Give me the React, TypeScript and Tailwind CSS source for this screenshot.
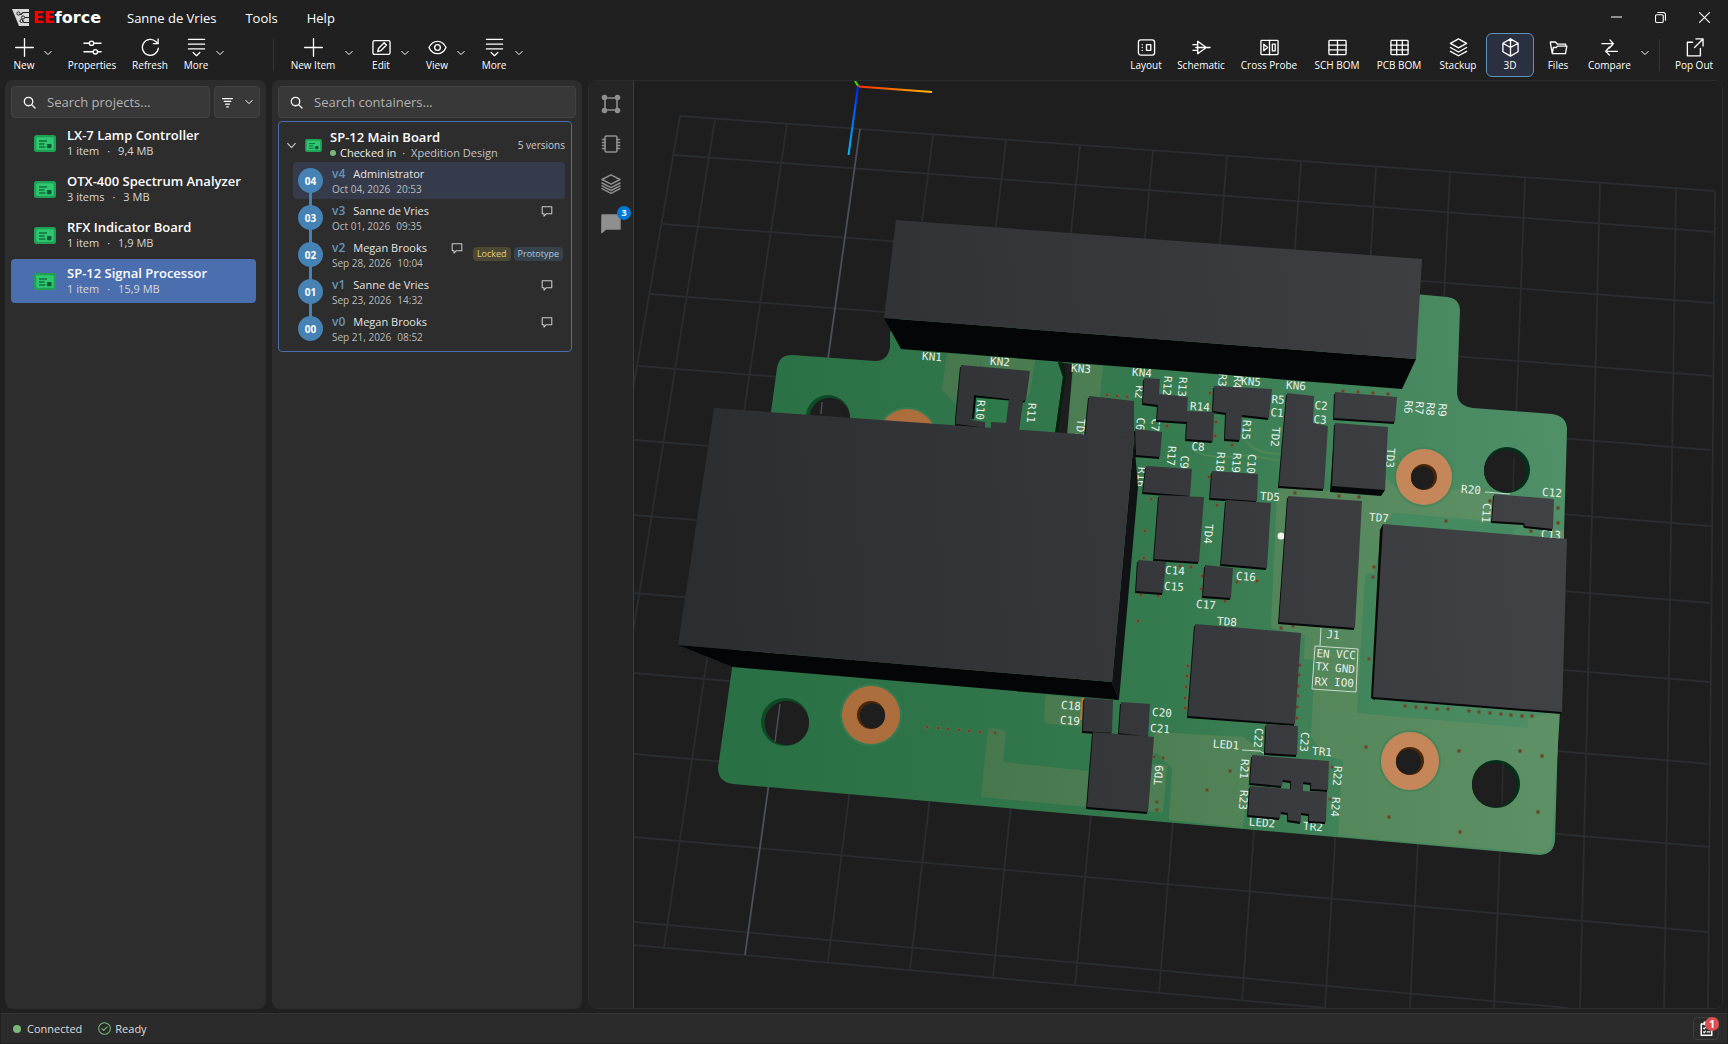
import { ReactNode } from "react";

type IconProps = { children: ReactNode; size?: number; stroke?: number; className?: string };

function Icon({ children, size = 20, stroke = 1.4, className = "" }: IconProps) {
  return (
    <svg
      width={size}
      height={size}
      viewBox="0 0 20 20"
      fill="none"
      stroke="currentColor"
      strokeWidth={stroke}
      strokeLinecap="round"
      strokeLinejoin="round"
      className={`shrink-0 ${className}`}
      aria-hidden="true"
    >
      {children}
    </svg>
  );
}

const icons = {
  plus: <path d="M10 0.7v18.6M0.7 10h18.6" />,
  sliders: (
    <>
      <path d="M1 5.5h5.5M11.5 5.5H19M1 14.5h9.5M15.5 14.5H19" />
      <circle cx="9" cy="5.5" r="2.3" />
      <circle cx="13" cy="14.5" r="2.3" />
    </>
  ),
  refresh: (
    <>
      <path d="M18.2 10.8a8.4 8.4 0 1 1-2.4-6.9l1.8 1.8" />
      <path d="M18 1v5h-5" />
    </>
  ),
  more: (
    <>
      <path d="M1.5 1.5h17M1.5 6.5h17M1.5 11.5h17" />
      <path d="M6.5 15.3l3.5 3.3 3.5-3.3" />
    </>
  ),
  edit: (
    <>
      <rect x="1" y="2.7" width="18" height="14.6" rx="1.8" />
      <path d="M6 14.3l.8-3.3 6-6 2.4 2.4-6 6z" />
    </>
  ),
  eye: (
    <>
      <path d="M1 10c2-4.2 5.2-6.5 9-6.5s7 2.3 9 6.5c-2 4.2-5.2 6.5-9 6.5S3 14.2 1 10z" />
      <circle cx="10" cy="10" r="3" />
    </>
  ),
  layout: (
    <>
      <rect x="1.5" y="2" width="17" height="16" rx="2.5" />
      <rect x="10" y="7" width="4.5" height="6" />
      <path d="M5.5 7v.1M5.5 10v.1M5.5 13v.1" />
    </>
  ),
  schematic: <path d="M1 7h5M1 13h5M6 3.5v13L15 10zM4 10h15" />,
  crossProbe: (
    <>
      <rect x="1" y="2.5" width="18" height="15" rx=".8" />
      <path d="M10 2.5v15M4 6.5v7l4-3.5z" />
      <rect x="13" y="6.5" width="3" height="7" />
    </>
  ),
  schBom: (
    <>
      <rect x="1" y="2.5" width="18" height="15" rx=".8" />
      <path d="M1 7.5h18M1 12.5h18M10 2.5v15" />
    </>
  ),
  pcbBom: (
    <>
      <rect x="1" y="2.5" width="18" height="15" rx=".8" />
      <path d="M1 7.5h18M1 12.5h18M7 2.5v15M13 2.5v15" />
    </>
  ),
  stack: <path d="M10 1l8.500 4.700L10 10.400 1.500 5.700zM1.500 10L10 14.700 18.500 10M1.500 14L10 18.700l8.500-4.700" />,
  cube: <path d="M10 1l8 4.500v9L10 19l-8-4.500v-9zM2 5.500l8 4.500 8-4.500M10 1v18" />,
  folder: <path d="M3.500 16.500L1.500 5.500V4.200h5.300L9 6.500h8.500v2M3.500 16.500h13.800l1.500-8H9L7.500 10H4.500z" />,
  compare: <path d="M2 6h12M10.500 2L14 6l-4 4.500M18.500 14h-12M10 9.500L6 14l4 4" />,
  popOut: <path d="M8 4.500H2.500v14.300h13.700V11M11.500 1h7.500v7.500M19 1l-9 9" />,
  search: (
    <>
      <circle cx="8.5" cy="8.5" r="6.5" />
      <path d="M13.300 13.300L18.500 18.500" />
    </>
  ),
  comment: <path d="M2 3h16v11.500H9L5 18.500v-4H2z" />,
};

type ToolButtonProps = { icon: keyof typeof icons; label: string; width: string; active?: boolean };

function ToolButton({ icon, label, width, active }: ToolButtonProps) {
  return (
    <button
      type="button"
      className={`flex h-11 shrink-0 flex-col items-center rounded-md border pt-1 text-[10px] leading-4 whitespace-nowrap text-white ${width} ${
        active ? "border-[#5f93bb] bg-[#2b3040]" : "border-transparent"
      }`}
    >
      <Icon size={19}>{icons[icon]}</Icon>
      <span>{label}</span>
    </button>
  );
}

function Chevron({ label }: { label: string }) {
  return (
    <button type="button" aria-label={label} className="flex h-10 w-4 shrink-0 items-center justify-center text-white">
      <Icon size={8} stroke={2.5}>
        <path d="M2 6l8 8 8-8" />
      </Icon>
    </button>
  );
}

function BoardIcon({ small }: { small?: boolean }) {
  return (
    <svg width={small ? 17 : 22} height={small ? 13 : 17} viewBox="0 0 22 17" className="shrink-0" aria-hidden="true">
      <rect width="22" height="17" rx="2.5" fill="#1fa055" />
      <rect x="2.300" y="2.300" width="17.400" height="12.400" rx="1" fill="#30c772" />
      <path d="M5 6h8M5 9h5.500M5 12h6.500" stroke="#12703c" strokeWidth="1.3" />
      <rect x="13" y="9" width="4.500" height="4.300" rx=".8" fill="#0b5a33" />
    </svg>
  );
}

function Logo() {
  return (
    <div className="flex w-[92px] items-center gap-1">
      <svg width="17" height="17" viewBox="0 0 17 17" aria-hidden="true">
        <path d="M0 0h17v17H7z" fill="#d8d8d8" />
        <path d="M17 3.500h-6L9 5.500H6M17 8.500h-5M17 13.500h-5l-2-2.500" stroke="#222" strokeWidth="1.2" fill="none" />
        <circle cx="6.500" cy="4.500" r="1.600" fill="#d8d8d8" stroke="#222" />
        <circle cx="11" cy="8.500" r="1.600" fill="#d8d8d8" stroke="#222" />
        <circle cx="9.500" cy="12" r="1.500" fill="#d8d8d8" stroke="#222" />
      </svg>
      <span className="font-['DejaVu_Sans'] text-[16px] leading-5 font-bold text-white">
        <span className="text-[#ff0000]">EE</span>force
      </span>
    </div>
  );
}

function TitleBar() {
  return (
    <div className="flex h-[33px] items-center pt-0.5 pl-3">
      <Logo />
      <nav className="ml-[23px] flex gap-[29px] text-[13px] leading-5 text-white">
        <button type="button">Sanne de Vries</button>
        <button type="button">Tools</button>
        <button type="button">Help</button>
      </nav>
      <div className="ml-auto flex pr-0.5 text-white">
        <button type="button" aria-label="Minimize" className="flex w-11 justify-center">
          <Icon size={11} stroke={2}>
            <path d="M0 9h20" />
          </Icon>
        </button>
        <button type="button" aria-label="Restore" className="flex w-11 justify-center">
          <Icon size={11} stroke={2}>
            <rect x="1" y="5" width="14" height="14" rx="2" />
            <path d="M5 1h10a4 4 0 0 1 4 4v10" />
          </Icon>
        </button>
        <button type="button" aria-label="Close" className="flex w-11 justify-center">
          <Icon size={11} stroke={2}>
            <path d="M1 1l18 18M19 1L1 19" />
          </Icon>
        </button>
      </div>
    </div>
  );
}

function Toolbar() {
  return (
    <div className="flex h-[47px]">
      <div className="flex w-[273px] shrink-0 pl-2">
        <ToolButton icon="plus" label="New" width="w-8" />
        <Chevron label="New options" />
        <div className="w-2" />
        <ToolButton icon="sliders" label="Properties" width="w-14" />
        <ToolButton icon="refresh" label="Refresh" width="w-[60px]" />
        <ToolButton icon="more" label="More" width="w-8" />
        <Chevron label="More options" />
      </div>
      <div className="mt-1.5 h-8 w-px bg-[#333]" />
      <div className="flex gap-2 pl-[11px]">
        <div className="flex">
          <ToolButton icon="plus" label="New Item" width="w-14" />
          <Chevron label="New item options" />
        </div>
        <div className="flex">
          <ToolButton icon="edit" label="Edit" width="w-8" />
          <Chevron label="Edit options" />
        </div>
        <div className="flex">
          <ToolButton icon="eye" label="View" width="w-8" />
          <Chevron label="View options" />
        </div>
        <div className="flex">
          <ToolButton icon="more" label="More" width="w-[34px]" />
          <Chevron label="More item options" />
        </div>
      </div>
      <div className="ml-auto flex pr-1.5">
        <ToolButton icon="layout" label="Layout" width="w-12" />
        <ToolButton icon="schematic" label="Schematic" width="w-[62px]" />
        <ToolButton icon="crossProbe" label="Cross Probe" width="w-[74px]" />
        <ToolButton icon="schBom" label="SCH BOM" width="w-[62px]" />
        <ToolButton icon="pcbBom" label="PCB BOM" width="w-[62px]" />
        <ToolButton icon="stack" label="Stackup" width="w-14" />
        <ToolButton icon="cube" label="3D" width="w-12" active />
        <ToolButton icon="folder" label="Files" width="w-12" />
        <ToolButton icon="compare" label="Compare" width="w-[55px]" />
        <Chevron label="Compare options" />
        <div className="mx-1.5 mt-1.5 h-8 w-px bg-[#333]" />
        <ToolButton icon="popOut" label="Pop Out" width="w-14" />
      </div>
    </div>
  );
}

function SearchBox({ placeholder }: { placeholder: string }) {
  return (
    <label className="flex h-8 min-w-0 flex-1 items-center gap-[11px] rounded border border-[#424242] bg-[#383838] pl-[11px] text-white">
      <Icon size={13} stroke={2}>
        {icons.search}
      </Icon>
      <input
        type="search"
        aria-label={placeholder}
        placeholder={placeholder}
        className="w-full min-w-0 bg-transparent text-[13px] leading-5 outline-none placeholder:text-[#b4b4b4]"
      />
    </label>
  );
}

const projects = [
  { name: "LX-7 Lamp Controller", items: "1 item", size: "9,4 MB" },
  { name: "OTX-400 Spectrum Analyzer", items: "3 items", size: "3 MB" },
  { name: "RFX Indicator Board", items: "1 item", size: "1,9 MB" },
  { name: "SP-12 Signal Processor", items: "1 item", size: "15,9 MB", selected: true },
];

function ProjectsPanel() {
  return (
    <section className="w-[261px] shrink-0 rounded-lg bg-[#2d2d2d] p-1.5">
      <div className="flex gap-1">
        <SearchBox placeholder="Search projects..." />
        <button
          type="button"
          aria-label="Filter"
          className="flex h-8 w-[46px] items-center justify-center gap-3 rounded border border-[#424242] bg-[#383838] text-white"
        >
          <Icon size={11} stroke={2}>
            <path d="M1 3h18M4 8h12M6.500 13h7M8.500 18h3" />
          </Icon>
          <Icon size={8} stroke={2.5}>
            <path d="M2 6l8 8 8-8" />
          </Icon>
        </button>
      </div>
      <ul className="mt-[3px] mr-1 space-y-0.5">
        {projects.map((p) => (
          <li key={p.name}>
            <button
              type="button"
              className={`flex h-11 w-full items-center gap-[11px] rounded pl-[23px] text-left text-white ${
                p.selected ? "bg-[#4b6eaf]" : ""
              }`}
            >
              <BoardIcon />
              <span>
                <span className="block text-[13px] leading-4 font-semibold">{p.name}</span>
                <span className="flex gap-2 text-[11px] leading-4 text-[#d8d8d8]">
                  <span>{p.items}</span>
                  <span>·</span>
                  <span>{p.size}</span>
                </span>
              </span>
            </button>
          </li>
        ))}
      </ul>
    </section>
  );
}

const versions = [
  { id: "04", tag: "v4", author: "Administrator", date: "Oct 04, 2026", time: "20:53", active: true },
  { id: "03", tag: "v3", author: "Sanne de Vries", date: "Oct 01, 2026", time: "09:35", comment: true },
  { id: "02", tag: "v2", author: "Megan Brooks", date: "Sep 28, 2026", time: "10:04", comment: true, badges: true },
  { id: "01", tag: "v1", author: "Sanne de Vries", date: "Sep 23, 2026", time: "14:32", comment: true },
  { id: "00", tag: "v0", author: "Megan Brooks", date: "Sep 21, 2026", time: "08:52", comment: true },
];

function ContainersPanel() {
  return (
    <section className="w-[310px] shrink-0 rounded-lg bg-[#2d2d2d] p-1.5">
      <div className="flex">
        <SearchBox placeholder="Search containers..." />
      </div>
      <div className="mt-[3px] mr-1 rounded border border-[#4b6eaf] pt-[7px] pr-1.5 pb-1 pl-2">
        <div className="mb-px flex h-8 items-center">
          <button type="button" aria-label="Collapse" className="text-[#ccc]">
            <Icon size={9} stroke={2.5}>
              <path d="M1.500 5.500l8.500 9 8.500-9" />
            </Icon>
          </button>
          <div className="mr-2 ml-[9px]">
            <BoardIcon small />
          </div>
          <div className="text-[#c4c4c4]">
            <div className="text-[13px] leading-4 font-semibold text-white">SP-12 Main Board</div>
            <div className="flex items-center gap-1.5 text-[11px] leading-4">
              <span className="flex items-center gap-1 text-[#eee]">
                <span className="size-1.5 rounded-full bg-[#7ab87a]" />
                Checked in
              </span>
              <span>·</span>
              <span>Xpedition Design</span>
            </div>
          </div>
          <span className="ml-auto text-[10px] leading-4 text-[#ccc]">5 versions</span>
        </div>
        <ol className="ml-1.5">
          {versions.map((v, i) => (
            <li key={v.id} className={`flex h-[37px] rounded pl-[5px] ${v.active ? "bg-[#353b4b]" : ""}`}>
              <div className="relative flex w-[25px] items-center justify-center">
                {i > 0 && <span className="absolute -top-2 h-5 w-[3px] bg-[#4682b4]" />}
                <span className="relative flex size-[25px] items-center justify-center rounded-full bg-[#4682b4] text-[10px] leading-none font-bold text-white">
                  {v.id}
                </span>
              </div>
              <div className="ml-[9px] pt-1">
                <div className="flex h-[15px] gap-2 text-[11px] leading-4 text-[#e4e4e4]">
                  <span className="text-[12px] font-semibold text-[#6694bb]">{v.tag}</span>
                  <span>{v.author}</span>
                </div>
                <div className="flex gap-1.5 text-[10px] leading-4 text-[#bbb]">
                  <span>{v.date}</span>
                  <span>{v.time}</span>
                </div>
              </div>
              <div className={`ml-auto flex ${v.badges ? "pr-0.5" : "pr-3"}`}>
                {v.comment && (
                  <button type="button" aria-label="Comments" className="mt-1.5 h-3 text-[#ccc]">
                    <Icon size={12} stroke={1.7}>
                      {icons.comment}
                    </Icon>
                  </button>
                )}
                {v.badges && (
                  <div className="mt-[11px] ml-2.5 flex h-3.5 gap-[3px] text-[9px] leading-[14px]">
                    <span className="rounded-sm bg-[#4d4833] px-1 text-[#e0cf80]">Locked</span>
                    <span className="rounded-sm bg-[#37424b] px-1 text-[#a9cbe2]">Prototype</span>
                  </div>
                )}
              </div>
            </li>
          ))}
        </ol>
      </div>
    </section>
  );
}

function ViewerRail() {
  return (
    <div className="flex w-[45px] shrink-0 flex-col items-center gap-5 border-r border-[#3c3c3c] bg-[#252525] pt-[13px] text-[#8f8f8f]">
      <button type="button" aria-label="Nets">
        <Icon stroke={1.6}>
          <path d="M4 4h12v12H4z" />
          <g fill="currentColor">
            <circle cx="3.500" cy="3.500" r="2" />
            <circle cx="16.500" cy="3.500" r="2" />
            <circle cx="3.500" cy="16.500" r="2" />
            <circle cx="16.500" cy="16.500" r="2" />
          </g>
        </Icon>
      </button>
      <button type="button" aria-label="Components">
        <Icon stroke={1.6}>
          <rect x="4" y="2" width="12" height="16" rx="1.5" />
          <path d="M1.500 5.500H4M1.500 8.500H4M1.500 11.500H4M1.500 14.500H4M16 5.500h2.500M16 8.500h2.500M16 11.500h2.500M16 14.500h2.500" />
        </Icon>
      </button>
      <button type="button" aria-label="Layers">
        <Icon stroke={1.5}>
          <path d="M10 .8L19 5.500l-9 4.700L1 5.500zM1 9l9 4.700L19 9M1 11.800l9 4.700 9-4.700M1 14.600l9 4.700 9-4.700" />
        </Icon>
      </button>
      <button type="button" aria-label="Comments" className="relative">
        <Icon>
          <path d="M1 1h18v14H5L.8 18.500z" fill="currentColor" />
        </Icon>
        <span className="absolute -top-2 -right-2.5 size-3.5 rounded-full bg-[#0078d4] text-center text-[9px] leading-3.5 font-bold text-white">
          3
        </span>
      </button>
    </div>
  );
}

// Grid line endpoints: x1, y1, x2, y2
const gridLines = [
  [680, 116, 539, 934],
  [715, 119, 584, 940],
  [787, 124, 664, 947],
  [933, 135, 828, 962],
  [1006, 140, 910, 969],
  [1080, 146, 993, 977],
  [1153, 151, 1075, 986],
  [1227, 156, 1159, 993],
  [1301, 162, 1242, 1001],
  [1376, 167, 1325, 1008],
  [1450, 173, 1410, 1008],
  [1525, 178, 1494, 1008],
  [1600, 184, 1580, 1008],
  [1676, 189, 1664, 1008],
  [1715, 191, 1708, 1008],
  [680, 116, 1715, 191],
  [674, 155, 1714, 232],
  [663, 224, 1713, 303],
  [650, 294, 1713, 376],
  [639, 366, 1711, 450],
  [634, 440, 1711, 526],
  [634, 515, 1710, 603],
  [634, 593, 1710, 682],
  [634, 673, 1710, 764],
  [634, 754, 1709, 847],
  [634, 837, 1708, 932],
  [634, 922, 1568, 1008],
  [634, 945, 1325, 1008],
];

const parts = [
  "961,365 1030,371 1026,400 1023,401 1019,432 956,424 956,418",
  "1089,396 1134,401 1134,438 1085,437",
  "1135,429 1162,432 1160,457 1136,455",
  "1144,378 1160,379 1159,394 1188,397 1187,411 1214,412 1213,441 1186,439 1187,422 1157,420 1158,405 1143,403",
  "1214,386 1272,389 1269,418 1242,415 1240,440 1225,439 1226,413 1213,411",
  "1287,393 1314,396 1313,423 1328,426 1324,489 1279,486",
  "1335,392 1397,397 1395,422 1334,418",
  "1335,423 1388,427 1385,490 1332,486",
  "1146,466 1192,469 1190,496 1143,492",
  "1212,471 1258,474 1257,501 1210,498",
  "1159,495 1204,497 1199,562 1154,559",
  "1226,500 1271,503 1267,568 1221,564",
  "1138,560 1166,562 1163,593 1136,591",
  "1205,565 1233,568 1231,598 1203,596",
  "1288,496 1362,501 1355,628 1279,622",
  "1383,524 1567,539 1562,712 1373,697",
  "1195,624 1301,633 1295,724 1188,716",
  "1266,724 1298,726 1297,755 1265,753",
  "1252,755 1329,761 1328,790 1311,789 1311,783 1303,782 1303,791 1327,792 1326,822 1309,821 1309,814 1301,813 1301,822 1288,820 1288,813 1281,812 1280,818 1248,815 1250,786 1291,789 1291,781 1283,780 1282,786 1250,783",
  "1084,698 1113,700 1112,733 1083,731",
  "1121,702 1150,704 1148,737 1119,733",
  "1093,732 1154,737 1148,812 1087,807",
  "1494,494 1554,499 1553,529 1525,526 1524,523 1492,521",
];

// Silkscreen text: label, centre x, centre y, rotation
const silkscreen: [string, number, number, number][] = [
  ["KN1", 932, 357, 4],
  ["KN2", 1000, 362, 4],
  ["KN3", 1081, 369, 4],
  ["KN4", 1142, 373, 4],
  ["R11", 1031, 413, 94],
  ["TD1", 1080, 429, 94],
  ["R2", 1139, 392, 94],
  ["R12", 1167, 386, 94],
  ["R13", 1182, 387, 94],
  ["R3", 1222, 380, 94],
  ["R4", 1237, 382, 94],
  ["KN5", 1251, 382, 4],
  ["KN6", 1296, 386, 4],
  ["R5", 1278, 400, 4],
  ["C1", 1277, 413, 4],
  ["C2", 1321, 406, 4],
  ["C3", 1320, 420, 4],
  ["R14", 1200, 407, 4],
  ["C8", 1198, 447, 4],
  ["R15", 1246, 430, 94],
  ["TD2", 1275, 437, 94],
  ["TD3", 1390, 458, 94],
  ["R6", 1408, 407, 94],
  ["R7", 1419, 408, 94],
  ["R8", 1430, 409, 94],
  ["R9", 1442, 410, 94],
  ["C6", 1140, 424, 94],
  ["C7", 1155, 425, 94],
  ["R17", 1171, 456, 94],
  ["C9", 1184, 462, 94],
  ["R18", 1220, 462, 94],
  ["R19", 1236, 463, 94],
  ["C10", 1251, 464, 94],
  ["R16", 1141, 477, 94],
  ["TD5", 1270, 497, 4],
  ["TD7", 1379, 518, 4],
  ["R20", 1471, 490, 4],
  ["C12", 1552, 493, 4],
  ["C11", 1486, 513, 94],
  ["C13", 1551, 535, 4],
  ["TD4", 1208, 534, 94],
  ["C14", 1175, 571, 4],
  ["C15", 1174, 587, 4],
  ["C16", 1246, 577, 4],
  ["C17", 1206, 605, 4],
  ["TD8", 1227, 622, 4],
  ["J1", 1333, 635, 4],
  ["EN", 1323, 654, 4],
  ["VCC", 1346, 655, 4],
  ["TX", 1322, 667, 4],
  ["GND", 1345, 669, 4],
  ["RX", 1321, 682, 4],
  ["IO0", 1344, 683, 4],
  ["C18", 1071, 706, 4],
  ["C19", 1070, 721, 4],
  ["C20", 1162, 713, 4],
  ["C21", 1160, 729, 4],
  ["TD9", 1159, 775, -86],
  ["C22", 1258, 738, 94],
  ["C23", 1304, 742, 94],
  ["LED1", 1226, 745, 4],
  ["TR1", 1322, 752, 4],
  ["R21", 1244, 769, 94],
  ["R22", 1337, 776, 94],
  ["R23", 1243, 800, 94],
  ["R24", 1335, 807, 94],
  ["LED2", 1262, 823, 4],
  ["TR2", 1313, 827, 4],
];

const vias = [
  [927, 727], [938, 728], [948, 729], [959, 730], [969, 731], [980, 732], [995, 733],
  [1107, 395], [1117, 396], [1127, 397], [1167, 426], [1210, 393], [1216, 422], [1215, 436], [1232, 445],
  [1343, 391], [1358, 392], [1373, 393], [1388, 394], [1209, 477], [1151, 499], [1217, 505], [1145, 531],
  [1144, 558], [1141, 595], [1158, 596], [1138, 621], [1180, 566], [1191, 567], [1202, 576], [1201, 589],
  [1225, 601], [1237, 582], [1257, 581], [1295, 493], [1339, 496], [1359, 497], [1281, 628], [1293, 626],
  [1374, 567], [1373, 577], [1369, 659], [1446, 521], [1490, 501], [1558, 508], [1558, 523], [1531, 531],
  [1188, 666], [1187, 676], [1186, 687], [1185, 698], [1185, 708],
  [1300, 665], [1299, 675], [1298, 686], [1298, 696], [1297, 707], [1297, 718],
  [1405, 706], [1416, 707], [1426, 708], [1437, 709], [1448, 709], [1469, 711], [1479, 712], [1490, 713],
  [1501, 714], [1511, 715], [1522, 716], [1532, 716],
  [1366, 747], [1459, 751], [1520, 751], [1542, 756], [1538, 812], [1460, 832], [1389, 817],
  [1230, 771], [1207, 790], [1163, 758], [1154, 757], [1157, 802], [1157, 810], [1332, 767], [1330, 799],
];

type HoleProps = { cx: number; cy: number; r: number; left?: boolean };

function Ring({ cx, cy, r, inner, left }: HoleProps & { inner: number }) {
  return (
    <g>
      <circle cx={cx} cy={cy} r={r + 2} fill="#3d8058" opacity=".6" />
      <circle cx={cx} cy={cy} r={r} fill={left ? "#ac6e3c" : "#c5875a"} />
      <circle cx={cx} cy={cy} r={inner} fill="#4a2708" />
      <circle cx={left ? cx + 1.5 : cx - 1.5} cy={cy + 0.8} r={inner - 1.4} fill="#1e1e1e" />
    </g>
  );
}

function Hole({ cx, cy, r, left }: HoleProps) {
  return (
    <g>
      <circle cx={cx} cy={cy} r={r} fill={left ? "#0e4a26" : "#02301a"} />
      <circle cx={left ? cx + 1.8 : cx - 1.8} cy={cy + 1} r={r - 1.8} fill="#1e1e1e" />
    </g>
  );
}

function BoardScene() {
  return (
    <svg
      viewBox="634 81 1088 927"
      preserveAspectRatio="xMidYMid slice"
      role="img"
      aria-label="3D view of SP-12 Main Board"
      className="block h-full min-w-0 flex-1 bg-[#1e1e1e]"
    >
      <defs>
        <linearGradient id="mask" gradientUnits="userSpaceOnUse" x1="730" y1="560" x2="1560" y2="500">
          <stop offset="0" stopColor="#2a7045" />
          <stop offset=".5" stopColor="#35794e" />
          <stop offset="1" stopColor="#509068" />
        </linearGradient>
        <linearGradient id="pour" gradientUnits="userSpaceOnUse" x1="940" y1="560" x2="1560" y2="500">
          <stop offset="0" stopColor="#46774c" />
          <stop offset="1" stopColor="#5f9266" />
        </linearGradient>
        <linearGradient id="body" gradientUnits="userSpaceOnUse" x1="680" y1="600" x2="1560" y2="540">
          <stop offset="0" stopColor="#2b2e31" />
          <stop offset=".55" stopColor="#37383c" />
          <stop offset="1" stopColor="#414246" />
        </linearGradient>
        <linearGradient id="axisX" gradientUnits="userSpaceOnUse" x1="858" y1="86" x2="932" y2="92">
          <stop offset="0" stopColor="#ff2a00" />
          <stop offset="1" stopColor="#ffc000" />
        </linearGradient>
        <linearGradient id="axisZ" gradientUnits="userSpaceOnUse" x1="858" y1="86" x2="848" y2="155">
          <stop offset="0" stopColor="#0022ff" />
          <stop offset="1" stopColor="#00bfff" />
        </linearGradient>
      </defs>

      <g stroke="#2a2d2f" strokeWidth="1.8">
        {gridLines.map(([x1, y1, x2, y2], i) => (
          <line key={i} x1={x1} y1={y1} x2={x2} y2={y2} />
        ))}
      </g>
      <path d="M860 129L745 955" stroke="#4b4f57" strokeWidth="1.8" />
      <path d="M855 81l3.500 5.500" stroke="#3fe000" strokeWidth="2" />
      <path d="M858 86.500l74 5.500" stroke="url(#axisX)" strokeWidth="2" />
      <path d="M858 86.500L848.500 155" stroke="url(#axisZ)" strokeWidth="2" />

      {/* board */}
      <path
        d="M890 333V347Q888 361 875 361L792 355Q779 355 777 368L771 412L732 668L718 768Q718 782 733 784L1540 855Q1554 854 1555 840L1567 430Q1567 416 1552 414L1473 408Q1457 406 1457 392L1460 310Q1459 298 1447 297L1415 294L900 300Z"
        fill="url(#mask)"
      />
      <g fill="url(#pour)">
        <path d="M947 353l34 3-1 11-19-1-5 38-14-14z" />
        <path d="M981 356l54 4-5 33-4 7 4-29-49-5z" />
        <path d="M1074 363l29 3-3 31-11-1-4 41-18-2z" />
        <path d="M988 729q9-2 18 2l-3 31 85 9-1 36-106-10z" />
        <path d="M1046 695l38 3-1 29-34-3q-5-1-5-6z" />
        <path d="M1154 732l89 5 20 14-11 4-9 73-74-8 3-52-14-14-5-2zM1152 764l15 1-4 47-15-1z" />
        <path d="M1277 493l10-20 38 18 62-12 20 18 46-8 40 4v28l-99-8-8 10-12 50-9 1-8 139 171 15v-10l32-7-8 129q-1 12-12 13l-202-17 5-76-18-4-3-5-11-14 4-77-11-1 1-24-34-7z" />
        <path d="M1556 530l8 1v10l-10-1z" />
      </g>
      <path d="M1393 514l123 12-4 10-122-9z" fill="#468a62" />
      <path d="M1192 449q15 12 55 6l35 6M1247 442q8 12 36 12" stroke="#4e8a55" strokeWidth="1.5" fill="none" />

      {/* slot */}
      <path d="M1058 362l5 15-8 57 12 1 6-71z" fill="#1e1e1e" />
      <path d="M1058 362l5 15-8 57h3l8-58-2-13z" fill="#06200f" />

      <Hole cx={828} cy={417} r={22} left />
      <Ring cx={907} cy={438} r={29} inner={14} left />
      <Hole cx={785} cy={722} r={24} left />
      <path d="M780 704L775 742M822 402l-1 12" stroke="#4b4f57" strokeWidth="1.5" />
      <Ring cx={871} cy={715} r={29} inner={14} left />
      <Ring cx={1424} cy={477} r={28} inner={13} />
      <Hole cx={1507} cy={470} r={23} />
      <Ring cx={1410} cy={761} r={29} inner={14} />
      <Hole cx={1496} cy={784} r={24} />
      <path d="M1514 457l-1 34M1503 762l-1 42" stroke="#2a2d2f" strokeWidth="1.5" />

      <g fill="#7a3a28" stroke="#4c7a4c" strokeWidth=".8">
        {vias.map(([x, y]) => (
          <circle key={`${x}-${y}`} cx={x} cy={y} r="1.9" />
        ))}
      </g>

      <g
        fill="#e6efe8"
        fontFamily="'DejaVu Sans Mono', monospace"
        fontSize="11"
        textAnchor="middle"
        dominantBaseline="central"
      >
        {silkscreen.map(([text, x, y, angle]) => (
          <text key={text} transform={`translate(${x} ${y}) rotate(${angle})`}>
            {text}
          </text>
        ))}
      </g>
      <path
        d="M1315 646l43 3-2 43-44-3zM1321 628l-1 18M1485 492l25 2M1242 750l18 1 7 4"
        stroke="#c9dccd"
        strokeWidth="1"
        fill="none"
      />
      <circle cx="1281" cy="536" r="3.5" fill="#f4f4f4" />
      <path d="M1083 698l-2 22" stroke="#c77a35" strokeWidth="2" />

      {/* parts, each with its dark underside */}
      <g fill="#060708">
        {parts.map((p) => (
          <polygon key={p} points={p} transform="translate(-1 2)" />
        ))}
        <path d="M1335 423l-5 69 51 4 4-6-3-8z" />
        <path d="M1383 524l-3 6-9 168 4 2z" />
      </g>
      <g fill="url(#body)">
        {parts.map((p) => (
          <polygon key={p} points={p} />
        ))}
      </g>
      <path d="M974 395l35 4-3 24-15-1v6h-6v-6l-13-2z" fill="#2f7a4b" />
      <path d="M974 395l35 4v1.500l-33-3-2 22-2-1z" fill="#060708" />
      <text
        transform="translate(980 410) rotate(94)"
        fill="#e6efe8"
        fontFamily="'DejaVu Sans Mono', monospace"
        fontSize="11"
        textAnchor="middle"
        dominantBaseline="central"
      >
        R10
      </text>

      <path d="M884 318L1416 359L1402 389L901 349Z" fill="#040506" />
      <path d="M896 220L1422 259L1416 359L884 318Z" fill="url(#body)" />
      <path d="M1134 438L1138 487L1119 700L1112 682Z" fill="#111216" />
      <path d="M678 645L1112 682L1119 700L733 667Z" fill="#040506" />
      <path d="M714 408L1134 438L1112 682L678 645Z" fill="url(#body)" />
    </svg>
  );
}

function StatusBar() {
  return (
    <footer className="mx-px mt-1 mb-px flex h-[30px] shrink-0 items-center border-t border-[#333] bg-[#2b2b2b] pr-2 pl-3 text-[11px] leading-4 text-[#ddd]">
      <span className="mr-1.5 size-2 rounded-full bg-[#7ab87a]" />
      Connected
      <Icon size={13} className="mr-1 ml-4 text-[#7ab87a]" stroke={1.6}>
        <circle cx="10" cy="10" r="9" />
        <path d="M6 10.300l2.700 2.700 5.300-5.500" />
      </Icon>
      Ready
      <button
        type="button"
        aria-label="Notifications"
        className="relative ml-auto flex h-[23px] w-[26px] items-center justify-center rounded border border-[#3d3d3d] text-white"
      >
        <Icon size={15} stroke={2}>
          <path d="M3 4h14v15H3zM7 1.500h6v3H7z" />
          <path d="M6 9.500l1 1 1.500-2M11 9.500h3.500M6 14.500l1 1 1.500-2M11 14.500h3.500" strokeWidth="1.6" />
        </Icon>
        <span className="absolute -top-px -right-px size-3.5 rounded-full bg-[#e04f4f] text-center text-[10px] leading-3.5 font-bold text-white">
          1
        </span>
      </button>
    </footer>
  );
}

export default function App() {
  return (
    <div className="flex h-screen flex-col overflow-hidden bg-[#202020] font-['Open_Sans','Noto_Sans',sans-serif]">
      <header className="shrink-0">
        <TitleBar />
        <Toolbar />
      </header>
      <main className="flex min-h-0 flex-1 gap-1.5 px-[5px]">
        <ProjectsPanel />
        <ContainersPanel />
        <section className="flex min-w-0 flex-1 overflow-hidden rounded-lg border border-[#2c2c2c]">
          <ViewerRail />
          <BoardScene />
        </section>
      </main>
      <StatusBar />
    </div>
  );
}
